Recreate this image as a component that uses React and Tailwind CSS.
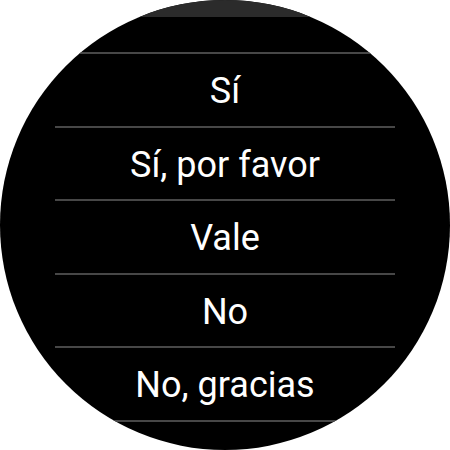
import React from "react";

const options = ["Sí", "Sí, por favor", "Vale", "No", "No, gracias"];

export default function App() {
  return (
    <div className="w-[450px] h-[450px] bg-white" style={{ fontFamily: "Roboto, sans-serif" }}>
      <div className="w-[450px] h-[450px] rounded-full bg-black overflow-hidden flex flex-col">
        <div className="h-[17px] bg-[#2b2b2b] shrink-0" />
        <div className="h-[35px] shrink-0" />
        <div className="w-[340px] mx-auto flex flex-col">
          <div className="h-[2px] bg-[#474747]" />
          {options.map((opt) => (
            <div key={opt} className="flex flex-col">
              <div className="h-[71.5px] pt-[3px] flex items-center justify-center text-white text-[36px] leading-none">
                {opt}
              </div>
              <div className="h-[2px] bg-[#474747]" />
            </div>
          ))}
        </div>
      </div>
    </div>
  );
}
